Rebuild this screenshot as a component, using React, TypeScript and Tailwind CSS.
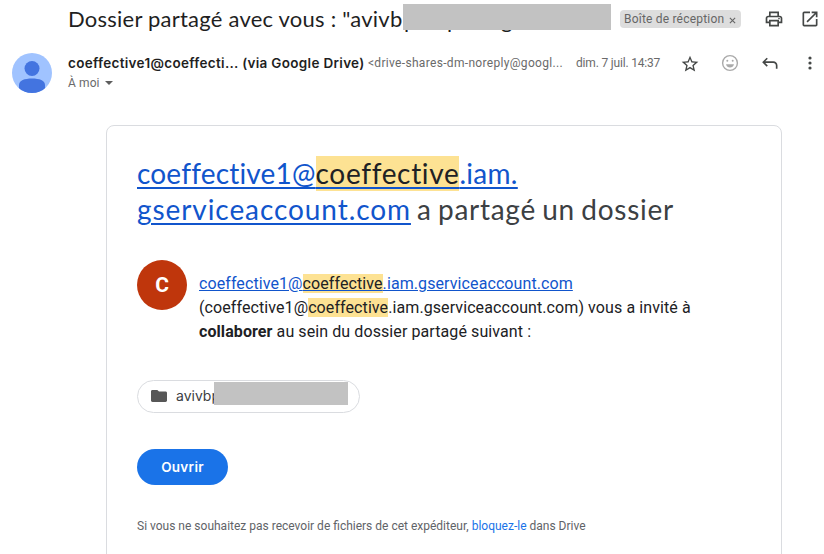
import React from "react";

const sans = "font-['Lato','Google_Sans',sans-serif]";
const label = "font-['Inter','Google_Sans',sans-serif]";

function Highlight({ children, tall }: { children: React.ReactNode; tall?: boolean }) {
  return (
    <span
      className={
        tall
          ? "bg-[#fde293] pb-px tracking-[0.66px] text-[#202124]"
          : "bg-[#fde293] text-[#202124]"
      }
    >
      {children}
    </span>
  );
}

function Header() {
  return (
    <header className="font-['Roboto',sans-serif]">
      <div className="flex h-[38px] items-center">
        <h1
          className={`${sans} ml-[68px] flex w-[335px] shrink-0 text-[22px] leading-[28px] tracking-[0.23px] whitespace-nowrap text-[#1f1f1f]`}
        >
          <span className="w-[336px] shrink-0">Dossier partagé avec vous : "avivb</span>
          <span className="w-[43px] shrink-0 pt-px">p</span>
          <span className="w-[54px] shrink-0 pt-px">p</span>
          <span className="shrink-0 pt-px">g</span>
        </h1>
        <div className="relative mb-1 h-[26px] w-[208px] shrink-0 bg-[#c2c2c2]" />
        <div className="ml-[9px] flex h-[18px] w-[121px] shrink-0 items-center rounded bg-[#dddddd] pl-1 text-[12px] text-[#666]">
          <span className="w-[101px] tracking-[0.2px] whitespace-nowrap">Boîte de réception</span>
          <svg className="mt-[2px] ml-1" width="7" height="7" viewBox="0 0 8 8" stroke="#666" strokeWidth="1.300">
            <path d="M1 1l6 6M7 1L1 7" />
          </svg>
        </div>
        <svg className="ml-[23px] shrink-0" width="20" height="20" viewBox="0 0 24 24" fill="#444746">
          <path d="M19 8h-1V3H6v5H5c-1.660 0-3 1.340-3 3v6h4v4h12v-4h4v-6c0-1.660-1.340-3-3-3zM8 5h8v3H8V5zm8 12v2H8v-4h8v2zm2-2v-2H6v2H4v-4c0-.550.450-1 1-1h14c.550 0 1 .450 1 1v4h-2z" />
          <circle cx="18" cy="11.500" r="1" />
        </svg>
        <svg className="ml-4 shrink-0" width="20" height="20" viewBox="0 0 24 24" fill="#444746">
          <path d="M19 19H5V5h7V3H5a2 2 0 0 0-2 2v14a2 2 0 0 0 2 2h14c1.100 0 2-.900 2-2v-7h-2v7zM14 3v2h3.590l-9.830 9.830 1.410 1.410L19 6.410V10h2V3h-7z" />
        </svg>
      </div>
      <div className="flex h-[87px] pt-[15px]">
        <svg className="ml-3 shrink-0" width="40" height="40" viewBox="0 0 40 40">
          <defs>
            <clipPath id="avatar">
              <circle cx="20" cy="20" r="20" />
            </clipPath>
          </defs>
          <g clipPath="url(#avatar)">
            <rect width="40" height="40" fill="#a0c3ff" />
            <circle cx="20" cy="15.500" r="7.500" fill="#4374e0" />
            <path d="M7 32c0-4.500 5.500-6.500 13-6.500S33 27.500 33 32v8H7z" fill="#4374e0" />
          </g>
        </svg>
        <div className="ml-4 w-[495px] shrink-0">
          <div className="flex h-5 items-center whitespace-nowrap">
            <span className={`${label} w-[300px] text-[13.5px] font-semibold tracking-[0.31px] text-[#1f1f1f]`}>
              coeffective1@coeffecti... (via Google Drive)
            </span>
            <span className="text-[12px] tracking-[0.320px] text-[#6a6a6a]">&lt;drive-shares-dm-noreply@googl...</span>
          </div>
          <div className="flex h-5 items-center text-[12px] text-[#6a6a6a]">
            <span className="w-[31px] tracking-[0.1px] whitespace-nowrap">À moi</span>
            <svg className="ml-[6px]" width="8" height="4" viewBox="0 0 8 4" fill="#5e5e5e">
              <path d="M0 0h8L4 4z" />
            </svg>
          </div>
        </div>
        <div className="ml-[13px] flex h-5 items-center">
          <span className="w-[104px] text-[12px] tracking-[-0.18px] whitespace-nowrap text-[#6a6a6a]">dim. 7 juil. 14:37</span>
          <svg className="mt-px" width="20" height="20" viewBox="0 0 24 24" fill="#444746">
            <path d="M22 9.240l-7.190-.620L12 2 9.190 8.630 2 9.240l5.460 4.730L5.820 21 12 17.270 18.180 21l-1.630-7.030L22 9.240zM12 15.400l-3.760 2.270 1-4.280-3.320-2.880 4.380-.380L12 6.100l1.710 4.040 4.380.380-3.320 2.880 1 4.280L12 15.400z" />
          </svg>
          <svg className="ml-5" width="20" height="20" viewBox="0 0 20 20" fill="none" stroke="#aaa" strokeWidth="1.400">
            <circle cx="10" cy="10" r="7.400" />
            <circle cx="7.300" cy="7.800" r="1" fill="#aaa" stroke="none" />
            <circle cx="12.700" cy="7.800" r="1" fill="#aaa" stroke="none" />
            <path d="M6 11.300h8c-.6 2.100-2 3.200-4 3.200s-3.400-1.100-4-3.200z" fill="#aaa" stroke="none" />
          </svg>
          <svg className="ml-5" width="20" height="20" viewBox="0 0 24 24" fill="#444746">
            <path d="M8 5.600L9.400 7 6.300 10H16c2.760 0 5 2.240 5 5v4h-2v-4c0-1.650-1.350-3-3-3H6.300l3.100 3L8 16.400 2.600 11z" />
          </svg>
          <svg className="ml-5" width="20" height="20" viewBox="0 0 20 20" fill="#444746">
            <circle cx="10" cy="5" r="1.600" />
            <circle cx="10" cy="10" r="1.600" />
            <circle cx="10" cy="15" r="1.600" />
          </svg>
        </div>
      </div>
    </header>
  );
}

function Card() {
  return (
    <main className="ml-[106px] h-[440px] w-[676px] rounded-lg border border-[#dadce0] pl-[30px] font-['Roboto',sans-serif]">
      <h2 className={`${sans} pt-[29px] text-[28px] leading-[36px] tracking-[0.92px] whitespace-nowrap text-[#3c4043]`}>
        <a className="text-[#1155cc] underline decoration-2 underline-offset-[3px]">
          <span className="tracking-[0.18px]">coeffective1@</span>
          <Highlight tall>coeffective</Highlight>
          <span className="tracking-[0.3px]">.iam.</span>
          <br />
          gserviceaccount.com
        </a>
        <span className="ml-[6px] tracking-[0.72px] [word-spacing:-1.500px]">a partagé un dossier</span>
      </h2>
      <div className="mt-[33px] flex h-[74px]">
        <div className="flex size-[50px] shrink-0 items-center justify-center rounded-full bg-[#bf360c] pt-px text-[21px] font-bold text-white">
          C
        </div>
        <p className="ml-3 pt-[12px] text-[16px] leading-[24px] tracking-[0.09px] whitespace-nowrap text-[#202124]">
          <a className="text-[#1155cc] underline">
            coeffective1@<Highlight>coeffective</Highlight>.iam.gserviceaccount.com
          </a>
          <br />
          (coeffective1@<Highlight>coeffective</Highlight>.iam.gserviceaccount.com) vous a invité à
          <br />
          <b>collaborer</b> au sein du dossier partagé suivant :
        </p>
      </div>
      <div className="mt-[46px] flex h-[33px] w-[223px] items-center rounded-full border border-[#dadce0] pl-[13px]">
        <svg className="mb-px" width="16" height="12" viewBox="0 0 16 12" fill="#575757">
          <path d="M1.500 0h4.800L8 1.600h6.500c.9 0 1.500.6 1.500 1.400v7.600c0 .8-.6 1.400-1.500 1.400h-13C.6 12 0 11.400 0 10.600V1.400C0 .6.600 0 1.500 0z" />
        </svg>
        <span className={`${label} mb-[2px] ml-[9px] w-[38px] text-[14px] whitespace-nowrap text-[#3c4043]`}>avivbp</span>
        <div className="relative mb-[6px] h-[23px] w-[134px] bg-[#c2c2c2]" />
      </div>
      <button
        className={`${label} mt-[36px] flex h-9 w-[91px] items-center justify-center rounded-full bg-[#1a73e8] text-[13.5px] font-semibold tracking-[0.3px] text-white`}
      >
        Ouvrir
      </button>
      <p className="mt-[32px] text-[12px] leading-[18px] whitespace-nowrap text-[#5f6368]">
        Si vous ne souhaitez pas recevoir de fichiers de cet expéditeur, <a className="text-[#1a73e8]">bloquez-le</a> dans Drive
      </p>
    </main>
  );
}

export default function App() {
  return (
    <div className="h-[554px] w-[824px] overflow-hidden bg-white">
      <Header />
      <Card />
    </div>
  );
}
